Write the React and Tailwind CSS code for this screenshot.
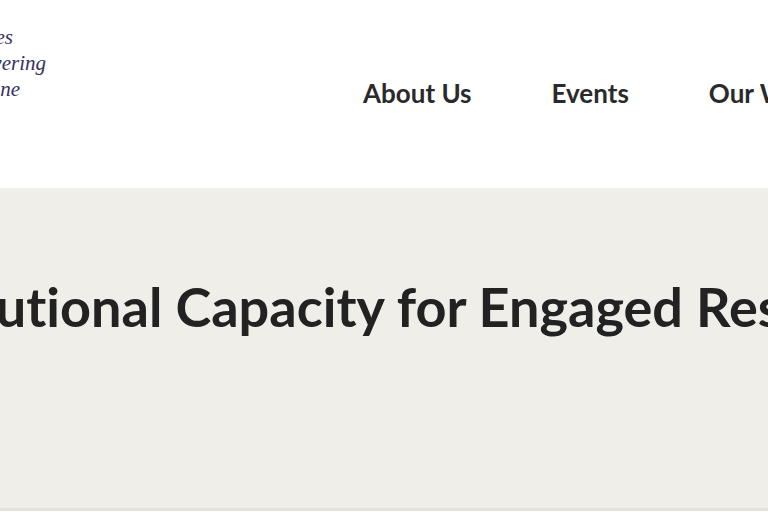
export default function App() {
  const navItems = ["About Us", "Events", "Our Work", "Resources"]

  return (
    <div className="w-[768px] h-[512px] overflow-hidden bg-white">
      <header className="h-[188px] flex">
        <div
          className="w-[200px] -ml-[154px] pt-[24px] text-right text-[21px] leading-[26px] italic text-[#36325f] shrink-0"
          style={{ fontFamily: '"Liberation Serif", serif' }}
        >
          <div className="pr-[33px]">Universities</div>
          <div>Empowering</div>
          <div className="pr-[26px]">Online</div>
        </div>
        <nav
          className="ml-[317px] flex items-center gap-20 pb-[2px] whitespace-nowrap shrink-0"
          style={{ fontFamily: "Lato, sans-serif" }}
        >
          {navItems.map((item) => (
            <a key={item} href="#" className="text-[26px] font-bold text-[#2a2a2a]">
              {item}
            </a>
          ))}
        </nav>
      </header>

      <section className="h-[323px] bg-[#efeee9] border-b-[3px] border-[#e7e2d9] pt-[87px]">
        <h1
          className="-ml-[337px] whitespace-nowrap text-[54px] leading-[1.2] font-bold text-[#222222] [font-variant-ligatures:none]"
          style={{ fontFamily: "Lato, sans-serif" }}
        >
          Building Institutional Capacity for Engaged Research
        </h1>
      </section>
    </div>
  )
}
